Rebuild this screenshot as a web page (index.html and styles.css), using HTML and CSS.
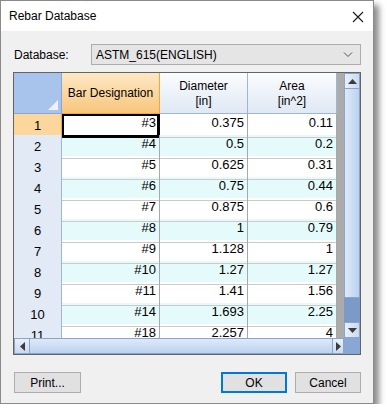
FILE: index.html
```html
<!DOCTYPE html>
<html lang="en">
<head>
    <meta charset="UTF-8">
    <meta name="viewport" content="width=device-width, initial-scale=1.0">
    <title>Rebar Database</title>
    <link rel="stylesheet" href="styles.css">
</head>
<body>
    <div class="window">
        <div class="titlebar">
            <span class="title">Rebar Database</span>
            <svg class="close" width="12" height="12" viewBox="0 0 12 12">
                <path d="M1 1 L11 11 M11 1 L1 11" stroke="#1a1a1a" stroke-width="1.1" fill="none"/>
            </svg>
        </div>

        <div class="content">
            <div class="field">
                <span class="label">Database:</span>
                <div class="combo">
                    <span>ASTM_615(ENGLISH)</span>
                    <svg width="10" height="6" viewBox="0 0 10 6">
                        <path d="M1 0.5 L5 4.5 L9 0.5" stroke="#555" stroke-width="1" fill="none"/>
                    </svg>
                </div>
            </div>

            <!-- таблица с арматурой -->
            <div class="grid">
                <div class="sheet">
                    <div class="row head">
                        <div class="corner-cell"><span class="tri"></span></div>
                        <div class="hcell active">Bar Designation</div>
                        <div class="hcell">Diameter<br>[in]</div>
                        <div class="hcell">Area<br>[in^2]</div>
                    </div>
                    <div class="row">
                        <div class="num active">1</div>
                        <div class="cell selected">#3</div>
                        <div class="cell">0.375</div>
                        <div class="cell">0.11</div>
                    </div>
                    <div class="row alt">
                        <div class="num">2</div>
                        <div class="cell">#4</div>
                        <div class="cell">0.5</div>
                        <div class="cell">0.2</div>
                    </div>
                    <div class="row">
                        <div class="num">3</div>
                        <div class="cell">#5</div>
                        <div class="cell">0.625</div>
                        <div class="cell">0.31</div>
                    </div>
                    <div class="row alt">
                        <div class="num">4</div>
                        <div class="cell">#6</div>
                        <div class="cell">0.75</div>
                        <div class="cell">0.44</div>
                    </div>
                    <div class="row">
                        <div class="num">5</div>
                        <div class="cell">#7</div>
                        <div class="cell">0.875</div>
                        <div class="cell">0.6</div>
                    </div>
                    <div class="row alt">
                        <div class="num">6</div>
                        <div class="cell">#8</div>
                        <div class="cell">1</div>
                        <div class="cell">0.79</div>
                    </div>
                    <div class="row">
                        <div class="num">7</div>
                        <div class="cell">#9</div>
                        <div class="cell">1.128</div>
                        <div class="cell">1</div>
                    </div>
                    <div class="row alt">
                        <div class="num">8</div>
                        <div class="cell">#10</div>
                        <div class="cell">1.27</div>
                        <div class="cell">1.27</div>
                    </div>
                    <div class="row">
                        <div class="num">9</div>
                        <div class="cell">#11</div>
                        <div class="cell">1.41</div>
                        <div class="cell">1.56</div>
                    </div>
                    <div class="row alt">
                        <div class="num">10</div>
                        <div class="cell">#14</div>
                        <div class="cell">1.693</div>
                        <div class="cell">2.25</div>
                    </div>
                    <div class="row">
                        <div class="num">11</div>
                        <div class="cell">#18</div>
                        <div class="cell">2.257</div>
                        <div class="cell">4</div>
                    </div>
                </div>

                <div class="vscroll">
                    <div class="arrow">
                        <svg width="9" height="5" viewBox="0 0 9 5"><path d="M0 5 L4.5 0 L9 5 Z" fill="#3c3c3c"/></svg>
                    </div>
                    <div class="vthumb"></div>
                    <div class="vtrack"></div>
                    <div class="arrow">
                        <svg width="9" height="5" viewBox="0 0 9 5"><path d="M0 0 L4.5 5 L9 0 Z" fill="#3c3c3c"/></svg>
                    </div>
                </div>

                <div class="hscroll">
                    <div class="harrow">
                        <svg width="5" height="9" viewBox="0 0 5 9"><path d="M5 0 L0 4.5 L5 9 Z" fill="#3c3c3c"/></svg>
                    </div>
                    <div class="hthumb"></div>
                    <div class="harrow">
                        <svg width="5" height="9" viewBox="0 0 5 9"><path d="M0 0 L5 4.5 L0 9 Z" fill="#3c3c3c"/></svg>
                    </div>
                </div>
                <div class="corner"></div>
            </div>

            <div class="buttons">
                <button class="btn print">Print...</button>
                <span class="spacer"></span>
                <button class="btn default">OK</button>
                <button class="btn">Cancel</button>
            </div>
        </div>
    </div>
</body>
</html>
```

FILE: styles.css
```css
/* окно диалога */
body {
    margin: 0;
    padding: 0;
    background-color: #fff;
    font-family: "Liberation Sans", Arial, sans-serif;
    font-size: 12px;
    color: #000;
}
.window {
    width: 372px;
    height: 402px;
    border: 1px solid #8a8a8a;
    background-color: #f0f0f0;
    box-shadow: 5px 5px 6px rgba(0, 0, 0, 0.45);
    display: flex;
    flex-direction: column;
}
.titlebar {
    height: 30px;
    background-color: #fff;
    display: flex;
    align-items: center;
    justify-content: space-between;
    padding: 0 9px 0 8px;
}
.title {
    font-size: 12px;
    color: #000;
}
.close {
    margin-top: 1px;
}
.content {
    flex: 1;
    padding: 13px 12px 10px 12px;
    display: flex;
    flex-direction: column;
}

/* выбор базы */
.field {
    display: flex;
    align-items: center;
    height: 21px;
}
.label {
    width: 77px;
    padding-left: 1px;
}
.combo {
    flex: 1;
    height: 19px;
    border: 1px solid #adadad;
    background-color: #e5e5e5;
    display: flex;
    align-items: center;
    justify-content: space-between;
    padding: 0 7px 0 4px;
    font-size: 12px;
}

/* таблица */
.grid {
    margin-top: 7px;
    width: 346px;
    height: 281px;
    border: 1px solid #646464;
    display: grid;
    grid-template-columns: 330px 16px;
    grid-template-rows: 265px 16px;
}
.sheet {
    background-color: #ababab;
    overflow: hidden;
}
.row {
    display: grid;
    grid-template-columns: 48px 98px 88px 89px;
    height: 21px;
    width: 323px;
    background-color: #fff;
}
.row.alt {
    background-color: #e5fbfb;
}
.row.head {
    height: 41px;
}
.corner-cell {
    background-color: #a9c4ec;
    border-right: 1px solid #8ba6d2;
    border-bottom: 1px solid #8ba6d2;
    position: relative;
}
.tri {
    position: absolute;
    right: 3px;
    bottom: 3px;
    width: 0;
    height: 0;
    border-left: 10px solid transparent;
    border-bottom: 10px solid #eef3fb;
}
.hcell {
    background: linear-gradient(#fbfcfe, #dfe8f4);
    border-right: 1px solid #9eb6ce;
    border-bottom: 1px solid #9eb6ce;
    display: flex;
    align-items: center;
    justify-content: center;
    text-align: center;
    line-height: 15px;
    padding-top: 1px;
}
.hcell.active {
    background: linear-gradient(#fde8c4, #f7c67c);
    border-right-color: #f3a548;
    border-bottom-color: #f3a548;
}
.num {
    background-color: #e2eaf6;
    border-right: 1px solid #9eb6ce;
    border-bottom: 1px solid #9eb6ce;
    text-align: center;
    font-size: 13px;
    line-height: 23px;
}
.num.active {
    background-color: #fbd79d;
    border-bottom-color: #f3a548;
    border-right-color: #f3a548;
}
.cell {
    border-right: 1px solid #a8a8a8;
    border-bottom: 1px solid #cacaca;
    text-align: right;
    padding-right: 3px;
    font-size: 13px;
    line-height: 17px;
}
.cell.selected {
    box-shadow: inset 0 0 0 2px #000;
    border-right-color: #000;
    border-bottom-color: #000;
}

/* полосы прокрутки */
.vscroll {
    display: flex;
    flex-direction: column;
    background-color: #7c9ac8;
}
.arrow {
    height: 16px;
    background: linear-gradient(90deg, #e9f0fa, #c9daf1);
    border: 1px solid #8aa4cc;
    box-sizing: border-box;
    display: flex;
    align-items: center;
    justify-content: center;
}
.vthumb {
    height: 209px;
    background: linear-gradient(90deg, #dde9f9, #bcd2ef);
    border-left: 1px solid #8aa4cc;
    border-right: 1px solid #8aa4cc;
    border-bottom: 1px solid #8aa4cc;
    box-sizing: border-box;
}
.vtrack {
    flex: 1;
}
.hscroll {
    display: flex;
    background-color: #7c9ac8;
}
.harrow {
    width: 16px;
    background: linear-gradient(#e9f0fa, #c9daf1);
    border: 1px solid #8aa4cc;
    box-sizing: border-box;
    display: flex;
    align-items: center;
    justify-content: center;
}
.harrow:last-child {
    width: 12px;
}
.hthumb {
    flex: 1;
    background: linear-gradient(#dde9f9, #bcd2ef);
    border-top: 1px solid #8aa4cc;
    border-bottom: 1px solid #8aa4cc;
    box-sizing: border-box;
}
.corner {
    background-color: #8aa7d3;
}

/* кнопки */
.buttons {
    margin-top: 17px;
    display: flex;
    gap: 8px;
    padding-left: 1px;
}
.spacer {
    flex: 1;
}
.btn {
    width: 66px;
    height: 21px;
    border: 1px solid #adadad;
    background-color: #e1e1e1;
    font-family: "Liberation Sans", Arial, sans-serif;
    font-size: 12px;
    color: #000;
    padding: 0;
}
.btn.print {
    width: 67px;
}
.btn.default {
    border: 2px solid #0078d7;
}
```
